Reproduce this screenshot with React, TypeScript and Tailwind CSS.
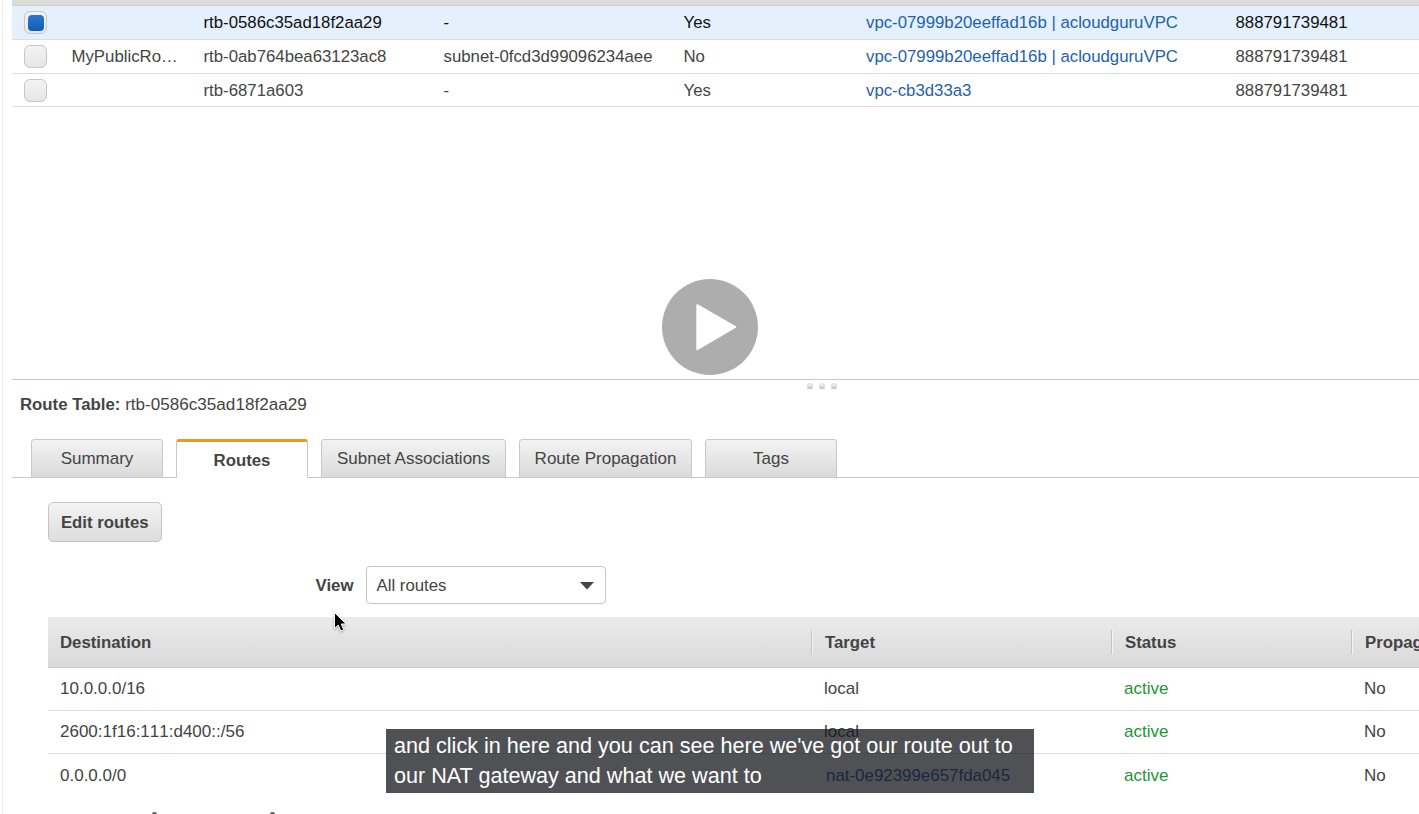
import React from "react";

type RouteTable = {
  name: string;
  id: string;
  subnet: string;
  main: string;
  vpc: string;
  owner: string;
  selected?: boolean;
};

const tables: RouteTable[] = [
  { name: "", id: "rtb-0586c35ad18f2aa29", subnet: "-", main: "Yes", vpc: "vpc-07999b20eeffad16b | acloudguruVPC", owner: "888791739481", selected: true },
  { name: "MyPublicRo…", id: "rtb-0ab764bea63123ac8", subnet: "subnet-0fcd3d99096234aee", main: "No", vpc: "vpc-07999b20eeffad16b | acloudguruVPC", owner: "888791739481" },
  { name: "", id: "rtb-6871a603", subnet: "-", main: "Yes", vpc: "vpc-cb3d33a3", owner: "888791739481" },
];

const tabs = [
  { label: "Summary", width: "w-[132px]" },
  { label: "Routes", width: "w-[132px]", active: true },
  { label: "Subnet Associations", width: "w-[185px]" },
  { label: "Route Propagation", width: "w-[173px]" },
  { label: "Tags", width: "w-[132px]" },
];

const routes = [
  { destination: "10.0.0.0/16", target: "local", height: "h-[43px]" },
  { destination: "2600:1f16:111:d400::/56", target: "local", height: "h-[43px]" },
  { destination: "0.0.0.0/0", target: "nat-0e92399e657fda045", link: true, height: "h-[44px]" },
];

function Checkbox({ checked }: { checked?: boolean }) {
  return (
    <span className="flex size-[23px] items-center justify-center rounded-[6px] border border-[#c6c6c6] bg-linear-to-b from-[#f3f3f3] to-[#e6e6e6]">
      {checked && <span className="size-4 rounded-[4px] bg-linear-to-b from-[#2a78d0] to-[#145cb3]" />}
    </span>
  );
}

function TableRow({ row, last }: { row: RouteTable; last: boolean }) {
  return (
    <div
      className={`grid shrink-0 grid-cols-[59.5px_132px_240px_240px_182.5px_369.5px_1fr] items-center border-b border-[#dadcde] whitespace-nowrap ${
        last ? "h-[33px] pt-px" : "h-[34px]"
      } ${row.selected ? "bg-[#e4f0fc] text-[#111]" : "bg-white text-[#444]"}`}
    >
      <span className="pl-3"><Checkbox checked={row.selected} /></span>
      <span>{row.name}</span>
      <span>{row.id}</span>
      <span>{row.subnet}</span>
      <span>{row.main}</span>
      <span className="text-[#1f62ab]">{row.vpc}</span>
      <span>{row.owner}</span>
    </div>
  );
}

function HeaderCell({ children }: { children: React.ReactNode }) {
  return (
    <div className="flex h-6 items-center border-l border-[#c2c2c2] pt-[2px] pl-[13px] shadow-[inset_1px_0_0_#f4f4f4]">{children}</div>
  );
}

export default function App() {
  return (
    <div className="relative flex h-[814px] w-[1419px] overflow-hidden bg-white font-['Liberation_Sans',Arial,sans-serif] text-[16.8px] leading-5 text-[#444]">
      <div className="ml-[2px] w-px shrink-0 bg-[#ebebeb]" />
      <main className="ml-[9px] flex min-w-0 flex-1 flex-col">
        <section className="flex h-[379px] shrink-0 flex-col">
          <div className="h-[6px] shrink-0 border-b border-[#cfcfcc] bg-[#dcdcda]" />
          {tables.map((row, i) => (
            <TableRow key={row.id} row={row} last={i === 2} />
          ))}
        </section>

        <div className="flex h-4 shrink-0 gap-[6px] border-t border-[#c8c8c8] pt-[3px] pl-[795px]">
          {[0, 1, 2].map((n) => (
            <span key={n} className="h-[6px] w-[6px] rounded-t-full rounded-b-xs border border-[#dedede] border-b-[#cacaca] bg-linear-to-b from-[#fafafa] to-[#c8c8c8]" />
          ))}
        </div>

        <h1 className="shrink-0 pl-2 text-[17.1px] font-normal">
          <span className="text-[16.8px] font-bold">Route Table:</span> rtb-0586c35ad18f2aa29
        </h1>

        <nav className="mt-6 flex h-[39px] shrink-0 gap-[13px] pl-[19px] text-[17px] shadow-[inset_0_-1px_0_#c8c8c8]">
          {tabs.map((t) => (
            <button
              key={t.label}
              className={`${t.width} h-[39px] shrink-0 rounded-t-[3px] border border-[#c8c8c8] whitespace-nowrap ${
                t.active
                  ? "border-t-[3px] border-b-0 border-t-[#f7941e] bg-white pt-[2px] text-[16.8px] font-bold"
                  : "bg-linear-to-b from-[#f3f3f3] to-[#dadada]"
              }`}
            >
              {t.label}
            </button>
          ))}
        </nav>

        <section className="flex flex-1 flex-col pl-9">
          <button className="mt-6 h-10 w-[113.5px] shrink-0 rounded-[5px] border border-[#c4c4c4] bg-linear-to-b from-[#f4f4f4] to-[#dddddd] pt-[2px] font-bold">
            Edit routes
          </button>
          <div className="mt-6 flex shrink-0 items-center pl-[267.5px]">
            <label className="w-[50px] pt-[2px] font-bold">View</label>
            <div className="flex h-[38px] w-[240px] items-center justify-between rounded-[4px] border border-[#c6c6c6] bg-white pr-[11px] pl-[10px]">
              <span className="pt-[2px]">All routes</span>
              <svg className="mt-[2px]" width="14" height="8" viewBox="0 0 14 8"><path d="M0 0h14L7 7.5z" fill="#444" /></svg>
            </div>
          </div>

          <div className="mt-[13px] grid h-[51px] shrink-0 grid-cols-[763px_300px_240px_1fr] items-center overflow-hidden border-b border-[#cdcdcd] bg-linear-to-b from-[#ebebeb] to-[#d9d9d9] font-bold whitespace-nowrap">
            <div className="pt-[2px] pl-3">Destination</div>
            <HeaderCell>Target</HeaderCell>
            <HeaderCell>Status</HeaderCell>
            <HeaderCell>Propagated</HeaderCell>
          </div>
          {routes.map((r, i) => (
            <div
              key={r.destination}
              className={`${r.height} grid shrink-0 grid-cols-[764px_300px_240px_1fr] items-center pl-3 text-[17px] ${i < 2 ? "border-b border-[#dcdcdc]" : ""}`}
            >
              <span className="[font-kerning:none]">{r.destination}</span>
              <span className={r.link ? "pl-[2px] text-[16.9px] text-[#1f62ab]" : ""}>{r.target}</span>
              <span className="text-[#259437]">active</span>
              <span>No</span>
            </div>
          ))}
          <div className="mt-auto flex shrink-0 gap-[113px] pl-[104px]">
            <span className="h-[2px] w-[5px] rounded-t-full bg-[#66666f]" />
            <span className="h-[2px] w-[5px] rounded-t-full bg-[#66666f]" />
          </div>
        </section>
      </main>

      <button aria-label="Play" className="absolute top-[279px] left-[662px] size-24">
        <svg width="96" height="96" viewBox="0 0 96 96">
          <circle cx="48" cy="48" r="48" fill="#adadad" />
          <path d="M35.3 26.2 73.3 48 35.3 70.2z" fill="#fff" stroke="#fff" strokeWidth="2" strokeLinejoin="round" />
        </svg>
      </button>

      <svg className="absolute top-[611px] left-[332px] drop-shadow-[0_1px_1px_rgba(0,0,0,0.3)]" width="16" height="22" viewBox="0 0 16 22">
        <path d="M2.5 1.5v16l3.7-3.4 2.6 6 3-1.3-2.6-5.8h5z" fill="#000" stroke="#fff" strokeWidth="1" />
      </svg>

      <div className="absolute top-[729px] left-[386px] h-16 w-[648px] bg-[rgba(22,23,28,0.75)] pt-[2px] pl-2 text-[21.6px] leading-[30px] whitespace-nowrap text-white">
        and click in here and you can see here we've got our route out to
        <br />
        our NAT gateway and what we want to
      </div>
    </div>
  );
}
